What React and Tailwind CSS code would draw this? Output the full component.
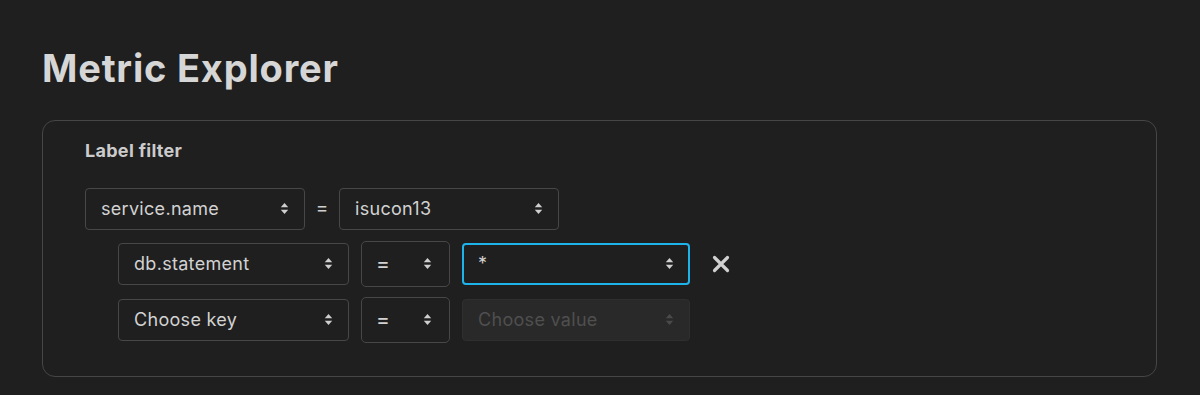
import { useState } from 'react'

function Arrows({ className = '' }) {
  return (
    <svg width="9" height="13" viewBox="0 0 9 13" className={className} fill="currentColor">
      <path d="M0.8 5.2 L4.5 0.9 L8.2 5.2 Z" />
      <path d="M0.8 7.8 L4.5 12.1 L8.2 7.8 Z" />
    </svg>
  )
}

function Select({ value, width, height = 'h-[42px]', focused, disabled, placeholder }) {
  let box = 'border border-[#474747] bg-[#1f1f1f] text-[#d2d2d2]'
  if (focused) box = 'border-2 border-[#1fb3ec] bg-[#1f1f1f] text-[#d2d2d2]'
  if (disabled) box = 'border border-[#2f2f2f] bg-[#292929] text-[#4f4f4f]'
  return (
    <div
      className={`${box} ${height} rounded-[4px] flex items-center justify-between shrink-0 ${focused ? 'pl-[14px] pr-[14px]' : 'pl-[15px] pr-[15px]'}`}
      style={{ width }}
    >
      <span className="text-[18px] leading-none tracking-[0.3px]">{value || placeholder}</span>
      <Arrows className={disabled ? 'text-[#4a4a4a]' : 'text-[#cfcfcf]'} />
    </div>
  )
}

function OpSelect() {
  return (
    <div className="w-[89px] h-[46px] border border-[#474747] rounded-[5px] flex items-center justify-between pl-[14px] pr-[17px] text-[#d2d2d2] shrink-0">
      <span className="text-[21px] leading-none">=</span>
      <Arrows className="text-[#cfcfcf]" />
    </div>
  )
}

export default function App() {
  const [rows] = useState([
    { key: 'db.statement', value: '*', focused: true },
    { key: null, value: null },
  ])

  return (
    <div
      className="min-h-screen bg-[#1f1f1f] px-[42px] pt-[46px] pb-4"
      style={{ fontFamily: 'Inter, "Noto Sans", sans-serif' }}
    >
      <h1 className="text-[38px] leading-[1.2] font-bold text-[#d6d6d6] tracking-[0.8px]">Metric Explorer</h1>

      <div className="mt-[28px] w-[1115px] h-[257px] border border-[#464646] rounded-[13px] pl-[42px] pt-[18px]">
        <div className="text-[18px] leading-[24px] font-bold text-[#cbcbcb] tracking-[0.3px]">Label filter</div>

        {/* root filter */}
        <div className="mt-[25px] flex items-center">
          <Select value="service.name" width={220} />
          <span className="w-[34px] text-center text-[19px] text-[#cfcfcf]">=</span>
          <Select value="isucon13" width={220} />
        </div>

        {/* nested filters */}
        <div className="pl-[33px] mt-[11px] flex flex-col gap-[10px]">
          {rows.map((r, i) => (
            <div key={i} className="flex items-center gap-[12px]">
              <Select value={r.key} placeholder="Choose key" width={231} />
              <OpSelect />
              <Select
                value={r.value}
                placeholder="Choose value"
                width={228}
                focused={r.focused}
                disabled={!r.key}
              />
              {r.key && (
                <svg width="18" height="18" viewBox="0 0 18 18" className="ml-[10px] text-[#d0d0d0]">
                  <path d="M2.5 2.5 L15.5 15.5 M15.5 2.5 L2.5 15.5" stroke="currentColor" strokeWidth="3.2" strokeLinecap="round" />
                </svg>
              )}
            </div>
          ))}
        </div>
      </div>
    </div>
  )
}
